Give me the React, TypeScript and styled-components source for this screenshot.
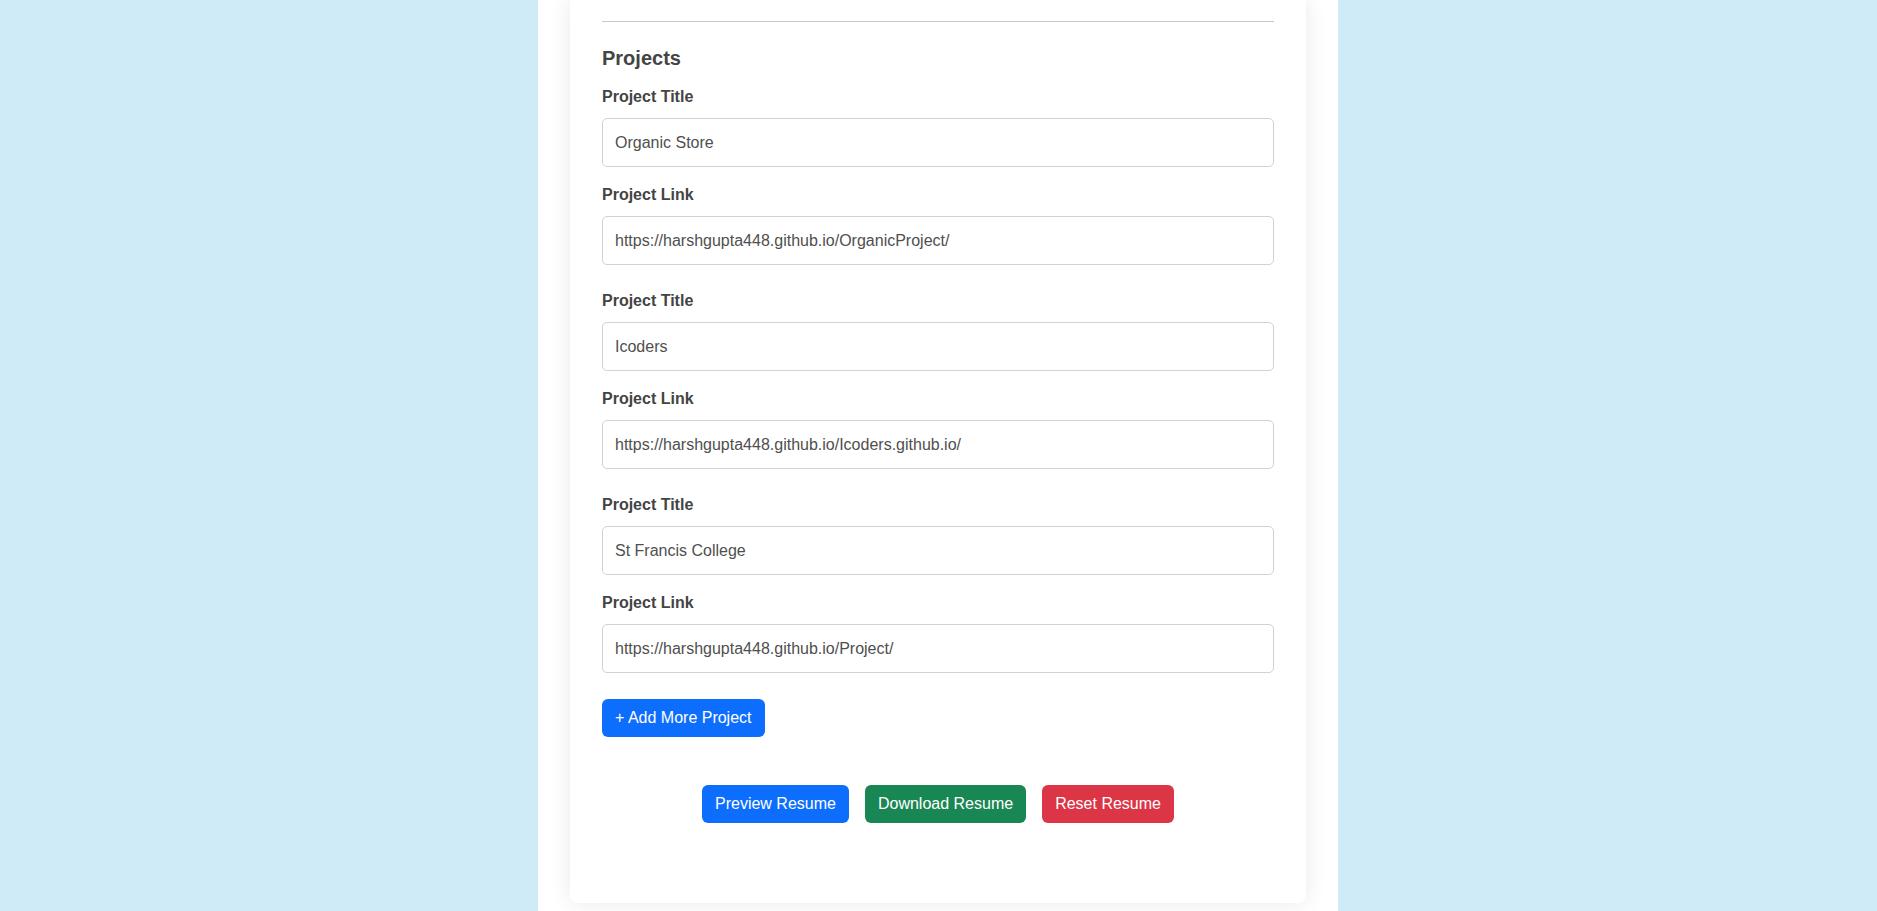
import React from "react";
import styled, { createGlobalStyle } from "styled-components";

const GlobalStyle = createGlobalStyle`
  html, body {
    margin: 0;
    padding: 0;
    background: #d0ebf8;
    font-family: "Liberation Sans", Arial, sans-serif;
    overflow: hidden;
  }
  * { box-sizing: border-box; }
`;

const Page = styled.div`
  display: flex;
  justify-content: center;
  padding-right: 1px;
`;

const Container = styled.main`
  width: 800px;
  min-height: 100vh;
  background: #ffffff;
  padding: 0 32px;
`;

const Card = styled.section`
  background: #ffffff;
  border-radius: 0 0 8px 8px;
  box-shadow: 0 0 22px rgba(0, 0, 0, 0.09);
  padding: 21px 32px 32px;
`;

const Divider = styled.hr`
  margin: 0;
  border: 0;
  border-top: 1px solid #c9c9c9;
`;

const SectionTitle = styled.h4`
  margin: 24px 0 17px;
  font-size: 20px;
  line-height: 24px;
  font-weight: 700;
  color: #444444;
`;

const Group = styled.div`
  display: flex;
  flex-direction: column;
  padding-bottom: 8px;
`;

const Label = styled.label`
  display: block;
  font-size: 16px;
  line-height: 20px;
  font-weight: 700;
  color: #444444;
  margin-bottom: 11px;
`;

const Input = styled.input`
  display: block;
  width: 100%;
  height: 49px;
  padding: 0 12px;
  margin: 0 0 18px;
  font-family: "Liberation Sans", Arial, sans-serif;
  font-size: 16px;
  color: #4f4f4f;
  background: #ffffff;
  border: 1px solid #cfd2d8;
  border-radius: 5px;
  outline: none;
`;

const Button = styled.button<{ $tone: "primary" | "success" | "danger" }>`
  display: inline-block;
  padding: 7px 13px;
  border: none;
  border-radius: 6px;
  font-family: "Liberation Sans", Arial, sans-serif;
  font-size: 16px;
  line-height: 24px;
  color: #ffffff;
  cursor: pointer;
  background: ${(p) =>
    p.$tone === "primary" ? "#0d6efd" : p.$tone === "success" ? "#198754" : "#dc3545"};
`;

const Actions = styled.div`
  display: flex;
  justify-content: center;
  gap: 16px;
  margin: 48px 0 48px;
`;

const projects = [
  { title: "Organic Store", link: "https://harshgupta448.github.io/OrganicProject/" },
  { title: "Icoders", link: "https://harshgupta448.github.io/Icoders.github.io/" },
  { title: "St Francis College", link: "https://harshgupta448.github.io/Project/" },
];

export default function App() {
  return (
    <>
      <GlobalStyle />
      <Page>
        <Container>
          <Card>
            <Divider />
            <SectionTitle>Projects</SectionTitle>
            {projects.map((p, i) => (
              <Group key={i}>
                <Label>Project Title</Label>
                <Input type="text" defaultValue={p.title} />
                <Label>Project Link</Label>
                <Input type="text" defaultValue={p.link} />
              </Group>
            ))}
            <Button $tone="primary">+ Add More Project</Button>
            <Actions>
              <Button $tone="primary">Preview Resume</Button>
              <Button $tone="success">Download Resume</Button>
              <Button $tone="danger">Reset Resume</Button>
            </Actions>
          </Card>
        </Container>
      </Page>
    </>
  );
}
